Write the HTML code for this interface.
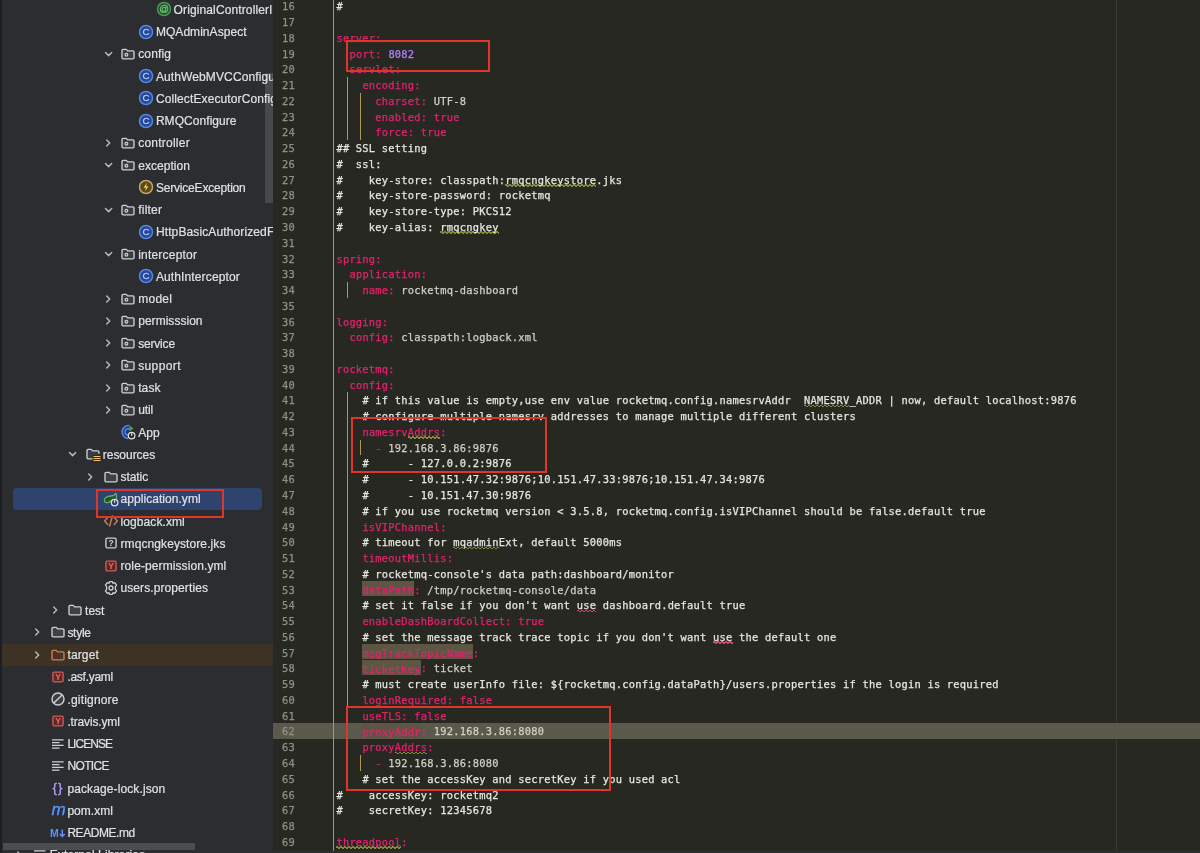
<!DOCTYPE html>
<html><head><meta charset="utf-8"><title>application.yml</title>
<style>
html,body{margin:0;padding:0;}
body{width:1200px;height:853px;overflow:hidden;background:#272822;position:relative;font-family:"Liberation Sans",sans-serif;}
#side{position:absolute;left:0;top:0;width:273px;height:853px;background:#2b2d30;overflow:hidden;}
.row{position:absolute;left:0;width:273px;height:22.25px;}
.row.tgt{background:#3d3223;left:2px;width:271px;}
.row.tgt .chev,.row.tgt .ico,.row.tgt .lbl{margin-left:-2px;}
.row.sel::before{content:"";position:absolute;left:13px;width:249px;top:0;height:22.25px;background:#2e436e;border-radius:4px;}
.chev,.ico{position:absolute;top:3.12px;width:16px;height:16px;}
.chev svg,.ico svg{display:block;}
.lbl{position:absolute;top:0.55px;height:22.25px;line-height:22.25px;font-size:12px;color:#dfe1e5;white-space:nowrap;letter-spacing:0.12px;-webkit-text-stroke:0.2px;}
#sb{position:absolute;left:264.5px;top:73px;width:8px;height:130px;background:#47494d;}
#hsb{position:absolute;left:2.5px;top:842.7px;width:192.5px;height:7.8px;background:#4b4d50;}
#edge{position:absolute;left:0;top:0;width:2px;height:853px;background:#1e1f22;}
#ed{position:absolute;left:273px;top:0;width:927px;height:853px;background:#272822;overflow:hidden;}
.ln{position:absolute;left:0;width:927px;height:15.765px;line-height:15.765px;font-family:"DejaVu Sans Mono","Liberation Mono",monospace;font-size:10.4px;letter-spacing:0.2387px;white-space:pre;-webkit-text-stroke:0.25px;}
.ln.cur{background:#5a594c;}
.no{position:absolute;top:1.05px;left:8px;width:14px;text-align:right;color:#90908a;}
.tx{position:absolute;top:1.05px;left:63.39999999999998px;color:#d8d8d2;}
.k{color:#e5216f;}
.n{color:#ae81ff;}
.v{color:#d0d0c6;}
.c{color:#e6e6e0;}
.hl{background:#5c5642;padding:2.9px 0 0.8px 0;}
.ty{background:linear-gradient(45deg,transparent 38%,#848a38 38%,#848a38 62%,transparent 62%) 0 100%/4px 2.5px repeat-x,linear-gradient(-45deg,transparent 38%,#848a38 38%,#848a38 62%,transparent 62%) 2px 100%/4px 2.5px repeat-x;padding-bottom:1px;}
.gr{background:linear-gradient(45deg,transparent 38%,#d0506a 38%,#d0506a 62%,transparent 62%) 0 100%/4px 2.5px repeat-x,linear-gradient(-45deg,transparent 38%,#d0506a 38%,#d0506a 62%,transparent 62%) 2px 100%/4px 2.5px repeat-x;padding-bottom:1px;}
.vline{position:absolute;left:333px;top:0;width:1px;height:853px;background:#b09756;}
.guide{position:absolute;width:1px;background:#b09756;}
.margin{position:absolute;top:0;width:1px;height:853px;background:#3a3b35;}
#bot{position:absolute;left:273px;top:850.5px;width:927px;height:3px;background:#2b2d30;}
.layer{position:absolute;left:0;top:0;width:100%;height:100%;will-change:transform;}
.rb{position:absolute;border:2.2px solid #de362b;box-sizing:border-box;}
</style></head>
<body>
<div id="ed">
<div class="margin" style="left:843px"></div>
<div class="layer">
<div class="ln" style="top:-1.78px"><span class="no">16</span><span class="tx"><span class="c">#</span></span></div>
<div class="ln" style="top:13.98px"><span class="no">17</span><span class="tx"></span></div>
<div class="ln" style="top:29.75px"><span class="no">18</span><span class="tx"><span class="k">server:</span></span></div>
<div class="ln" style="top:45.51px"><span class="no">19</span><span class="tx">  <span class="k">port:</span> <span class="n">8082</span></span></div>
<div class="ln" style="top:61.28px"><span class="no">20</span><span class="tx">  <span class="k">servlet:</span></span></div>
<div class="ln" style="top:77.04px"><span class="no">21</span><span class="tx">    <span class="k">encoding:</span></span></div>
<div class="ln" style="top:92.81px"><span class="no">22</span><span class="tx">      <span class="k">charset:</span> <span class="v">UTF-8</span></span></div>
<div class="ln" style="top:108.57px"><span class="no">23</span><span class="tx">      <span class="k">enabled:</span> <span class="k">true</span></span></div>
<div class="ln" style="top:124.34px"><span class="no">24</span><span class="tx">      <span class="k">force:</span> <span class="k">true</span></span></div>
<div class="ln" style="top:140.10px"><span class="no">25</span><span class="tx"><span class="c">## SSL setting</span></span></div>
<div class="ln" style="top:155.87px"><span class="no">26</span><span class="tx"><span class="c">#  ssl:</span></span></div>
<div class="ln" style="top:171.63px"><span class="no">27</span><span class="tx"><span class="c">#    key-store: classpath:<span class="ty">rmqcngkeystore</span>.jks</span></span></div>
<div class="ln" style="top:187.40px"><span class="no">28</span><span class="tx"><span class="c">#    key-store-password: rocketmq</span></span></div>
<div class="ln" style="top:203.16px"><span class="no">29</span><span class="tx"><span class="c">#    key-store-type: PKCS12</span></span></div>
<div class="ln" style="top:218.93px"><span class="no">30</span><span class="tx"><span class="c">#    key-alias: <span class="ty">rmqcngkey</span></span></span></div>
<div class="ln" style="top:234.69px"><span class="no">31</span><span class="tx"></span></div>
<div class="ln" style="top:250.46px"><span class="no">32</span><span class="tx"><span class="k">spring:</span></span></div>
<div class="ln" style="top:266.22px"><span class="no">33</span><span class="tx">  <span class="k">application:</span></span></div>
<div class="ln" style="top:281.99px"><span class="no">34</span><span class="tx">    <span class="k">name:</span> <span class="v">rocketmq-dashboard</span></span></div>
<div class="ln" style="top:297.75px"><span class="no">35</span><span class="tx"></span></div>
<div class="ln" style="top:313.52px"><span class="no">36</span><span class="tx"><span class="k">logging:</span></span></div>
<div class="ln" style="top:329.28px"><span class="no">37</span><span class="tx">  <span class="k">config:</span> <span class="v">classpath:logback.xml</span></span></div>
<div class="ln" style="top:345.05px"><span class="no">38</span><span class="tx"></span></div>
<div class="ln" style="top:360.81px"><span class="no">39</span><span class="tx"><span class="k">rocketmq:</span></span></div>
<div class="ln" style="top:376.58px"><span class="no">40</span><span class="tx">  <span class="k">config:</span></span></div>
<div class="ln" style="top:392.34px"><span class="no">41</span><span class="tx">    <span class="c"># if this value is empty,use env value rocketmq.config.namesrvAddr  <span class="ty">NAMESRV</span>_ADDR | now, default localhost:9876</span></span></div>
<div class="ln" style="top:408.11px"><span class="no">42</span><span class="tx">    <span class="c"># configure multiple namesrv addresses to manage multiple different clusters</span></span></div>
<div class="ln" style="top:423.87px"><span class="no">43</span><span class="tx">    <span class="k">namesrv<span class="ty">Addrs</span>:</span></span></div>
<div class="ln" style="top:439.64px"><span class="no">44</span><span class="tx">      <span class="k">-</span> <span class="v">192.168.3.86:9876</span></span></div>
<div class="ln" style="top:455.40px"><span class="no">45</span><span class="tx">    <span class="c">#      - 127.0.0.2:9876</span></span></div>
<div class="ln" style="top:471.17px"><span class="no">46</span><span class="tx">    <span class="c">#      - 10.151.47.32:9876;10.151.47.33:9876;10.151.47.34:9876</span></span></div>
<div class="ln" style="top:486.93px"><span class="no">47</span><span class="tx">    <span class="c">#      - 10.151.47.30:9876</span></span></div>
<div class="ln" style="top:502.70px"><span class="no">48</span><span class="tx">    <span class="c"># if you use rocketmq version &lt; 3.5.8, rocketmq.config.isVIPChannel should be false.default true</span></span></div>
<div class="ln" style="top:518.46px"><span class="no">49</span><span class="tx">    <span class="k">isVIPChannel:</span></span></div>
<div class="ln" style="top:534.23px"><span class="no">50</span><span class="tx">    <span class="c"># timeout for <span class="ty">mqadmin</span>Ext, default 5000ms</span></span></div>
<div class="ln" style="top:549.99px"><span class="no">51</span><span class="tx">    <span class="k">timeoutMillis:</span></span></div>
<div class="ln" style="top:565.76px"><span class="no">52</span><span class="tx">    <span class="c"># rocketmq-console&#x27;s data path:dashboard/monitor</span></span></div>
<div class="ln" style="top:581.52px"><span class="no">53</span><span class="tx">    <span class="k"><span class="hl">dataPath</span>:</span> <span class="v">/tmp/rocketmq-console/data</span></span></div>
<div class="ln" style="top:597.29px"><span class="no">54</span><span class="tx">    <span class="c"># set it false if you don&#x27;t want <span class="gr">use</span> dashboard.default true</span></span></div>
<div class="ln" style="top:613.05px"><span class="no">55</span><span class="tx">    <span class="k">enableDashBoardCollect:</span> <span class="k">true</span></span></div>
<div class="ln" style="top:628.82px"><span class="no">56</span><span class="tx">    <span class="c"># set the message track trace topic if you don&#x27;t want <span class="gr">use</span> the default one</span></span></div>
<div class="ln" style="top:644.58px"><span class="no">57</span><span class="tx">    <span class="k"><span class="hl">msgTrackTopicName</span>:</span></span></div>
<div class="ln" style="top:660.35px"><span class="no">58</span><span class="tx">    <span class="k"><span class="hl">ticketKey</span>:</span> <span class="v">ticket</span></span></div>
<div class="ln" style="top:676.11px"><span class="no">59</span><span class="tx">    <span class="c"># must create userInfo file: ${rocketmq.config.dataPath}/users.properties if the login is required</span></span></div>
<div class="ln" style="top:691.88px"><span class="no">60</span><span class="tx">    <span class="k">loginRequired:</span> <span class="k">false</span></span></div>
<div class="ln" style="top:707.64px"><span class="no">61</span><span class="tx">    <span class="k">useTLS:</span> <span class="k">false</span></span></div>
<div class="ln cur" style="top:723.41px"><span class="no">62</span><span class="tx">    <span class="k"><span class="hl">proxyAddr</span>:</span> <span class="v">192.168.3.86:8080</span></span></div>
<div class="ln" style="top:739.17px"><span class="no">63</span><span class="tx">    <span class="k">proxy<span class="ty">Addrs</span>:</span></span></div>
<div class="ln" style="top:754.94px"><span class="no">64</span><span class="tx">      <span class="k">-</span> <span class="v">192.168.3.86:8080</span></span></div>
<div class="ln" style="top:770.70px"><span class="no">65</span><span class="tx">    <span class="c"># set the accessKey and secretKey if you used acl</span></span></div>
<div class="ln" style="top:786.47px"><span class="no">66</span><span class="tx"><span class="c">#    accessKey: rocketmq2</span></span></div>
<div class="ln" style="top:802.23px"><span class="no">67</span><span class="tx"><span class="c">#    secretKey: 12345678</span></span></div>
<div class="ln" style="top:818.00px"><span class="no">68</span><span class="tx"></span></div>
<div class="ln" style="top:833.76px"><span class="no">69</span><span class="tx"><span class="k"><span class="ty">threadpool</span>:</span></span></div>
</div>
</div>
<div class="vline"></div>
<div id="bot"></div>
<div class="guide" style="left:347px;top:77.0px;height:63.1px"></div>
<div class="guide" style="left:360px;top:92.8px;height:47.3px"></div>
<div class="guide" style="left:347px;top:282.0px;height:15.8px"></div>
<div class="guide" style="left:347px;top:392.3px;height:394.1px"></div>
<div class="guide" style="left:360px;top:439.6px;height:15.8px"></div>
<div class="guide" style="left:360px;top:754.9px;height:15.8px"></div>
<div id="side">
<div id="sb"></div>
<div class="layer">
<div class="row" style="top:-1.72px"><span class="ico" style="left:156px;top:2.72px"><svg width="16" height="16" viewBox="0 0 16 16"><circle cx="8" cy="8" r="6.5" fill="#1f5229" stroke="#4e9556" stroke-width="1.5"/><text x="8" y="10.9" font-family="Liberation Sans, sans-serif" font-size="9.5" text-anchor="middle" fill="#74c47e" stroke="#74c47e" stroke-width="0.3">@</text></svg></span><span class="lbl" style="left:173.6px">OriginalControllerI</span></div>
<div class="row" style="top:20.52px"><span class="ico" style="left:138px;top:3.48px"><svg width="16" height="16" viewBox="0 0 16 16"><circle cx="8" cy="8" r="6.5" fill="#21469a" stroke="#5a86da" stroke-width="1.5"/><text x="8.1" y="11.4" font-family="Liberation Sans, sans-serif" font-size="9.8" text-anchor="middle" fill="#b6c9f2" stroke="#b6c9f2" stroke-width="0.3">C</text></svg></span><span class="lbl" style="left:155.9px;letter-spacing:0.051px">MQAdminAspect</span></div>
<div class="row" style="top:42.77px"><span class="chev" style="left:99.8px;top:3.12px"><svg width="16" height="16" viewBox="0 0 16 16"><path d="M5.5 6.5 L8.6 9.6 L11.7 6.5" fill="none" stroke="#b4b6bc" stroke-width="1.5" stroke-linecap="round" stroke-linejoin="round"/></svg></span><span class="ico" style="left:120px;top:3.23px"><svg width="16" height="16" viewBox="0 0 16 16"><path d="M2 4.4 Q2 3.3 3.1 3.3 H6.2 L7.7 4.9 H12.9 Q14 4.9 14 6 V11.7 Q14 12.8 12.9 12.8 H3.1 Q2 12.8 2 11.7 Z" fill="#3a3c40" stroke="#ced0d6" stroke-width="1.35"/><circle cx="6.4" cy="8.8" r="1.4" fill="none" stroke="#ced0d6" stroke-width="1.2"/></svg></span><span class="lbl" style="left:138.2px;letter-spacing:0.161px">config</span></div>
<div class="row" style="top:65.03px"><span class="ico" style="left:138px;top:2.97px"><svg width="16" height="16" viewBox="0 0 16 16"><circle cx="8" cy="8" r="6.5" fill="#21469a" stroke="#5a86da" stroke-width="1.5"/><text x="8.1" y="11.4" font-family="Liberation Sans, sans-serif" font-size="9.8" text-anchor="middle" fill="#b6c9f2" stroke="#b6c9f2" stroke-width="0.3">C</text></svg></span><span class="lbl" style="left:155.9px">AuthWebMVCConfigu</span></div>
<div class="row" style="top:87.28px"><span class="ico" style="left:138px;top:2.72px"><svg width="16" height="16" viewBox="0 0 16 16"><circle cx="8" cy="8" r="6.5" fill="#21469a" stroke="#5a86da" stroke-width="1.5"/><text x="8.1" y="11.4" font-family="Liberation Sans, sans-serif" font-size="9.8" text-anchor="middle" fill="#b6c9f2" stroke="#b6c9f2" stroke-width="0.3">C</text></svg></span><span class="lbl" style="left:155.9px">CollectExecutorConfig</span></div>
<div class="row" style="top:109.53px"><span class="ico" style="left:138px;top:3.47px"><svg width="16" height="16" viewBox="0 0 16 16"><circle cx="8" cy="8" r="6.5" fill="#21469a" stroke="#5a86da" stroke-width="1.5"/><text x="8.1" y="11.4" font-family="Liberation Sans, sans-serif" font-size="9.8" text-anchor="middle" fill="#b6c9f2" stroke="#b6c9f2" stroke-width="0.3">C</text></svg></span><span class="lbl" style="left:155.9px;letter-spacing:0.056px">RMQConfigure</span></div>
<div class="row" style="top:131.78px"><span class="chev" style="left:99.8px;top:3.12px"><svg width="16" height="16" viewBox="0 0 16 16"><path d="M6.7 5 L9.7 8 L6.7 11" fill="none" stroke="#b4b6bc" stroke-width="1.5" stroke-linecap="round" stroke-linejoin="round"/></svg></span><span class="ico" style="left:120px;top:3.22px"><svg width="16" height="16" viewBox="0 0 16 16"><path d="M2 4.4 Q2 3.3 3.1 3.3 H6.2 L7.7 4.9 H12.9 Q14 4.9 14 6 V11.7 Q14 12.8 12.9 12.8 H3.1 Q2 12.8 2 11.7 Z" fill="#3a3c40" stroke="#ced0d6" stroke-width="1.35"/><circle cx="6.4" cy="8.8" r="1.4" fill="none" stroke="#ced0d6" stroke-width="1.2"/></svg></span><span class="lbl" style="left:138.2px;letter-spacing:0.234px">controller</span></div>
<div class="row" style="top:154.03px"><span class="chev" style="left:99.8px;top:3.12px"><svg width="16" height="16" viewBox="0 0 16 16"><path d="M5.5 6.5 L8.6 9.6 L11.7 6.5" fill="none" stroke="#b4b6bc" stroke-width="1.5" stroke-linecap="round" stroke-linejoin="round"/></svg></span><span class="ico" style="left:120px;top:2.97px"><svg width="16" height="16" viewBox="0 0 16 16"><path d="M2 4.4 Q2 3.3 3.1 3.3 H6.2 L7.7 4.9 H12.9 Q14 4.9 14 6 V11.7 Q14 12.8 12.9 12.8 H3.1 Q2 12.8 2 11.7 Z" fill="#3a3c40" stroke="#ced0d6" stroke-width="1.35"/><circle cx="6.4" cy="8.8" r="1.4" fill="none" stroke="#ced0d6" stroke-width="1.2"/></svg></span><span class="lbl" style="left:138.2px;letter-spacing:0.036px">exception</span></div>
<div class="row" style="top:176.28px"><span class="ico" style="left:138px;top:2.72px"><svg width="16" height="16" viewBox="0 0 16 16"><circle cx="8" cy="8" r="6.5" fill="#5a4719" stroke="#c6a468" stroke-width="1.5"/><path d="M9 3.6 L5.5 8.7 H7.9 L7 12.4 L10.5 7.3 H8.1 Z" fill="#efc65c"/></svg></span><span class="lbl" style="left:155.9px;letter-spacing:-0.189px">ServiceException</span></div>
<div class="row" style="top:198.53px"><span class="chev" style="left:99.8px;top:3.12px"><svg width="16" height="16" viewBox="0 0 16 16"><path d="M5.5 6.5 L8.6 9.6 L11.7 6.5" fill="none" stroke="#b4b6bc" stroke-width="1.5" stroke-linecap="round" stroke-linejoin="round"/></svg></span><span class="ico" style="left:120px;top:3.47px"><svg width="16" height="16" viewBox="0 0 16 16"><path d="M2 4.4 Q2 3.3 3.1 3.3 H6.2 L7.7 4.9 H12.9 Q14 4.9 14 6 V11.7 Q14 12.8 12.9 12.8 H3.1 Q2 12.8 2 11.7 Z" fill="#3a3c40" stroke="#ced0d6" stroke-width="1.35"/><circle cx="6.4" cy="8.8" r="1.4" fill="none" stroke="#ced0d6" stroke-width="1.2"/></svg></span><span class="lbl" style="left:138.2px;letter-spacing:0.221px">filter</span></div>
<div class="row" style="top:220.78px"><span class="ico" style="left:138px;top:3.22px"><svg width="16" height="16" viewBox="0 0 16 16"><circle cx="8" cy="8" r="6.5" fill="#21469a" stroke="#5a86da" stroke-width="1.5"/><text x="8.1" y="11.4" font-family="Liberation Sans, sans-serif" font-size="9.8" text-anchor="middle" fill="#b6c9f2" stroke="#b6c9f2" stroke-width="0.3">C</text></svg></span><span class="lbl" style="left:155.9px">HttpBasicAuthorizedFi</span></div>
<div class="row" style="top:243.03px"><span class="chev" style="left:99.8px;top:3.12px"><svg width="16" height="16" viewBox="0 0 16 16"><path d="M5.5 6.5 L8.6 9.6 L11.7 6.5" fill="none" stroke="#b4b6bc" stroke-width="1.5" stroke-linecap="round" stroke-linejoin="round"/></svg></span><span class="ico" style="left:120px;top:2.97px"><svg width="16" height="16" viewBox="0 0 16 16"><path d="M2 4.4 Q2 3.3 3.1 3.3 H6.2 L7.7 4.9 H12.9 Q14 4.9 14 6 V11.7 Q14 12.8 12.9 12.8 H3.1 Q2 12.8 2 11.7 Z" fill="#3a3c40" stroke="#ced0d6" stroke-width="1.35"/><circle cx="6.4" cy="8.8" r="1.4" fill="none" stroke="#ced0d6" stroke-width="1.2"/></svg></span><span class="lbl" style="left:138.2px;letter-spacing:0.209px">interceptor</span></div>
<div class="row" style="top:265.27px"><span class="ico" style="left:138px;top:2.73px"><svg width="16" height="16" viewBox="0 0 16 16"><circle cx="8" cy="8" r="6.5" fill="#21469a" stroke="#5a86da" stroke-width="1.5"/><text x="8.1" y="11.4" font-family="Liberation Sans, sans-serif" font-size="9.8" text-anchor="middle" fill="#b6c9f2" stroke="#b6c9f2" stroke-width="0.3">C</text></svg></span><span class="lbl" style="left:155.9px;letter-spacing:0.129px">AuthInterceptor</span></div>
<div class="row" style="top:287.52px"><span class="chev" style="left:99.8px;top:3.12px"><svg width="16" height="16" viewBox="0 0 16 16"><path d="M6.7 5 L9.7 8 L6.7 11" fill="none" stroke="#b4b6bc" stroke-width="1.5" stroke-linecap="round" stroke-linejoin="round"/></svg></span><span class="ico" style="left:120px;top:3.48px"><svg width="16" height="16" viewBox="0 0 16 16"><path d="M2 4.4 Q2 3.3 3.1 3.3 H6.2 L7.7 4.9 H12.9 Q14 4.9 14 6 V11.7 Q14 12.8 12.9 12.8 H3.1 Q2 12.8 2 11.7 Z" fill="#3a3c40" stroke="#ced0d6" stroke-width="1.35"/><circle cx="6.4" cy="8.8" r="1.4" fill="none" stroke="#ced0d6" stroke-width="1.2"/></svg></span><span class="lbl" style="left:138.2px;letter-spacing:0.263px">model</span></div>
<div class="row" style="top:309.77px"><span class="chev" style="left:99.8px;top:3.12px"><svg width="16" height="16" viewBox="0 0 16 16"><path d="M6.7 5 L9.7 8 L6.7 11" fill="none" stroke="#b4b6bc" stroke-width="1.5" stroke-linecap="round" stroke-linejoin="round"/></svg></span><span class="ico" style="left:120px;top:3.23px"><svg width="16" height="16" viewBox="0 0 16 16"><path d="M2 4.4 Q2 3.3 3.1 3.3 H6.2 L7.7 4.9 H12.9 Q14 4.9 14 6 V11.7 Q14 12.8 12.9 12.8 H3.1 Q2 12.8 2 11.7 Z" fill="#3a3c40" stroke="#ced0d6" stroke-width="1.35"/><circle cx="6.4" cy="8.8" r="1.4" fill="none" stroke="#ced0d6" stroke-width="1.2"/></svg></span><span class="lbl" style="left:138.2px;letter-spacing:0.034px">permisssion</span></div>
<div class="row" style="top:332.02px"><span class="chev" style="left:99.8px;top:3.12px"><svg width="16" height="16" viewBox="0 0 16 16"><path d="M6.7 5 L9.7 8 L6.7 11" fill="none" stroke="#b4b6bc" stroke-width="1.5" stroke-linecap="round" stroke-linejoin="round"/></svg></span><span class="ico" style="left:120px;top:2.98px"><svg width="16" height="16" viewBox="0 0 16 16"><path d="M2 4.4 Q2 3.3 3.1 3.3 H6.2 L7.7 4.9 H12.9 Q14 4.9 14 6 V11.7 Q14 12.8 12.9 12.8 H3.1 Q2 12.8 2 11.7 Z" fill="#3a3c40" stroke="#ced0d6" stroke-width="1.35"/><circle cx="6.4" cy="8.8" r="1.4" fill="none" stroke="#ced0d6" stroke-width="1.2"/></svg></span><span class="lbl" style="left:138.2px;letter-spacing:-0.188px">service</span></div>
<div class="row" style="top:354.27px"><span class="chev" style="left:99.8px;top:3.12px"><svg width="16" height="16" viewBox="0 0 16 16"><path d="M6.7 5 L9.7 8 L6.7 11" fill="none" stroke="#b4b6bc" stroke-width="1.5" stroke-linecap="round" stroke-linejoin="round"/></svg></span><span class="ico" style="left:120px;top:2.73px"><svg width="16" height="16" viewBox="0 0 16 16"><path d="M2 4.4 Q2 3.3 3.1 3.3 H6.2 L7.7 4.9 H12.9 Q14 4.9 14 6 V11.7 Q14 12.8 12.9 12.8 H3.1 Q2 12.8 2 11.7 Z" fill="#3a3c40" stroke="#ced0d6" stroke-width="1.35"/><circle cx="6.4" cy="8.8" r="1.4" fill="none" stroke="#ced0d6" stroke-width="1.2"/></svg></span><span class="lbl" style="left:138.2px;letter-spacing:0.381px">support</span></div>
<div class="row" style="top:376.52px"><span class="chev" style="left:99.8px;top:3.12px"><svg width="16" height="16" viewBox="0 0 16 16"><path d="M6.7 5 L9.7 8 L6.7 11" fill="none" stroke="#b4b6bc" stroke-width="1.5" stroke-linecap="round" stroke-linejoin="round"/></svg></span><span class="ico" style="left:120px;top:3.48px"><svg width="16" height="16" viewBox="0 0 16 16"><path d="M2 4.4 Q2 3.3 3.1 3.3 H6.2 L7.7 4.9 H12.9 Q14 4.9 14 6 V11.7 Q14 12.8 12.9 12.8 H3.1 Q2 12.8 2 11.7 Z" fill="#3a3c40" stroke="#ced0d6" stroke-width="1.35"/><circle cx="6.4" cy="8.8" r="1.4" fill="none" stroke="#ced0d6" stroke-width="1.2"/></svg></span><span class="lbl" style="left:138.2px;letter-spacing:0.096px">task</span></div>
<div class="row" style="top:398.77px"><span class="chev" style="left:99.8px;top:3.12px"><svg width="16" height="16" viewBox="0 0 16 16"><path d="M6.7 5 L9.7 8 L6.7 11" fill="none" stroke="#b4b6bc" stroke-width="1.5" stroke-linecap="round" stroke-linejoin="round"/></svg></span><span class="ico" style="left:120px;top:3.23px"><svg width="16" height="16" viewBox="0 0 16 16"><path d="M2 4.4 Q2 3.3 3.1 3.3 H6.2 L7.7 4.9 H12.9 Q14 4.9 14 6 V11.7 Q14 12.8 12.9 12.8 H3.1 Q2 12.8 2 11.7 Z" fill="#3a3c40" stroke="#ced0d6" stroke-width="1.35"/><circle cx="6.4" cy="8.8" r="1.4" fill="none" stroke="#ced0d6" stroke-width="1.2"/></svg></span><span class="lbl" style="left:138.2px;letter-spacing:-0.086px">util</span></div>
<div class="row" style="top:421.02px"><span class="ico" style="left:120px;top:2.98px"><svg width="16" height="16" viewBox="0 0 16 16"><path d="M9 1.6 A6.4 6.4 0 1 0 8 14.4" fill="#24386e" stroke="#548af7" stroke-width="1.5"/><path d="M9.6 5.4 A3 3 0 1 0 9.2 10.6" fill="none" stroke="#548af7" stroke-width="1.5"/><path d="M9.3 1.2 L13.6 4.4 L9.3 7.6 Z" fill="#4f9a56"/><circle cx="11.6" cy="11.6" r="3.3" fill="#2b2d30" stroke="#dfe1e5" stroke-width="1.2"/><path d="M11.6 9.2 V11.8" stroke="#dfe1e5" stroke-width="1.2"/></svg></span><span class="lbl" style="left:138.2px;letter-spacing:0.114px">App</span></div>
<div class="row" style="top:443.27px"><span class="chev" style="left:64.4px;top:3.12px"><svg width="16" height="16" viewBox="0 0 16 16"><path d="M5.5 6.5 L8.6 9.6 L11.7 6.5" fill="none" stroke="#b4b6bc" stroke-width="1.5" stroke-linecap="round" stroke-linejoin="round"/></svg></span><span class="ico" style="left:85px;top:2.73px"><svg width="16" height="16" viewBox="0 0 16 16"><path d="M8.4 12.8 H3.1 Q2 12.8 2 11.7 V4.4 Q2 3.3 3.1 3.3 H6.2 L7.7 4.9 H12.9 Q14 4.9 14 6 V7.8" fill="#3a3c40" stroke="#ced0d6" stroke-width="1.35"/><rect x="7.6" y="8.8" width="8.4" height="7.2" fill="#2b2d30"/><path d="M8.5 10.5 H15.5 M8.5 12.5 H15.5 M8.5 14.5 H15.5" stroke="#f2c55c" stroke-width="1"/></svg></span><span class="lbl" style="left:102.8px;letter-spacing:-0.032px">resources</span></div>
<div class="row" style="top:465.52px"><span class="chev" style="left:82.1px;top:3.12px"><svg width="16" height="16" viewBox="0 0 16 16"><path d="M6.7 5 L9.7 8 L6.7 11" fill="none" stroke="#b4b6bc" stroke-width="1.5" stroke-linecap="round" stroke-linejoin="round"/></svg></span><span class="ico" style="left:103px;top:3.48px"><svg width="16" height="16" viewBox="0 0 16 16"><path d="M2 4.4 Q2 3.3 3.1 3.3 H6.2 L7.7 4.9 H12.9 Q14 4.9 14 6 V11.7 Q14 12.8 12.9 12.8 H3.1 Q2 12.8 2 11.7 Z" fill="#3e4044" stroke="#ced0d6" stroke-width="1.35"/></svg></span><span class="lbl" style="left:120.5px;letter-spacing:-0.069px">static</span></div>
<div class="row sel" style="top:487.77px"><span class="ico" style="left:103px;top:3.23px"><svg width="16" height="16" viewBox="0 0 16 16"><path d="M1.4 10.6 C0.8 7 3.6 5 7.6 5 C10.2 5 11.8 4.2 12.8 2.2 C14 5 13.8 7.4 12.4 9 L8.4 9.4 C6.4 12 3 12.4 1.4 10.6 Z" fill="#2a5230" stroke="#5fae68" stroke-width="1.3" stroke-linejoin="round"/><circle cx="11.6" cy="11.6" r="3.3" fill="#2e436e" stroke="#dfe1e5" stroke-width="1.2"/><path d="M11.6 9.2 V11.8" stroke="#dfe1e5" stroke-width="1.2"/></svg></span><span class="lbl" style="left:120.5px;letter-spacing:0.055px">application.yml</span></div>
<div class="row" style="top:510.02px"><span class="ico" style="left:103px;top:2.98px"><svg width="16" height="16" viewBox="0 0 16 16"><path d="M4.8 4.6 L1.6 8 L4.8 11.4 M11.2 4.6 L14.4 8 L11.2 11.4 M9.4 3 L6.6 13" fill="none" stroke="#c9805a" stroke-width="1.4" stroke-linecap="round" stroke-linejoin="round"/></svg></span><span class="lbl" style="left:120.5px;letter-spacing:0.086px">logback.xml</span></div>
<div class="row" style="top:532.27px"><span class="ico" style="left:103px;top:2.73px"><svg width="16" height="16" viewBox="0 0 16 16"><rect x="2.9" y="3.1" width="10.2" height="9.8" rx="1.3" fill="none" stroke="#ced0d6" stroke-width="1.35"/><text x="8" y="11.2" font-family="Liberation Sans, sans-serif" font-size="8.5" font-weight="bold" text-anchor="middle" fill="#ced0d6">?</text></svg></span><span class="lbl" style="left:120.5px;letter-spacing:0.09px">rmqcngkeystore.jks</span></div>
<div class="row" style="top:554.52px"><span class="ico" style="left:103px;top:3.48px"><svg width="16" height="16" viewBox="0 0 16 16"><rect x="2.9" y="3.1" width="10.2" height="9.8" rx="1.3" fill="#5a2a28" stroke="#d25c58" stroke-width="1.35"/><text x="8" y="11.3" font-family="Liberation Sans, sans-serif" font-size="8.5" font-weight="bold" text-anchor="middle" fill="#ee6a66">Y</text></svg></span><span class="lbl" style="left:120.5px;letter-spacing:0.098px">role-permission.yml</span></div>
<div class="row" style="top:576.77px"><span class="ico" style="left:103px;top:3.23px"><svg width="16" height="16" viewBox="0 0 16 16"><path d="M6.6 1.6 H9.4 L10 3.3 L11.7 2.7 L13.6 5.2 L12.4 6.6 V9.4 L13.6 10.8 L11.7 13.3 L10 12.7 L9.4 14.4 H6.6 L6 12.7 L4.3 13.3 L2.4 10.8 L3.6 9.4 V6.6 L2.4 5.2 L4.3 2.7 L6 3.3 Z" fill="none" stroke="#ced0d6" stroke-width="1.3" stroke-linejoin="round"/><circle cx="8" cy="8" r="2" fill="none" stroke="#ced0d6" stroke-width="1.3"/></svg></span><span class="lbl" style="left:120.5px;letter-spacing:0.091px">users.properties</span></div>
<div class="row" style="top:599.02px"><span class="chev" style="left:46.7px;top:3.12px"><svg width="16" height="16" viewBox="0 0 16 16"><path d="M6.7 5 L9.7 8 L6.7 11" fill="none" stroke="#b4b6bc" stroke-width="1.5" stroke-linecap="round" stroke-linejoin="round"/></svg></span><span class="ico" style="left:67px;top:2.98px"><svg width="16" height="16" viewBox="0 0 16 16"><path d="M2 4.4 Q2 3.3 3.1 3.3 H6.2 L7.7 4.9 H12.9 Q14 4.9 14 6 V11.7 Q14 12.8 12.9 12.8 H3.1 Q2 12.8 2 11.7 Z" fill="#3e4044" stroke="#ced0d6" stroke-width="1.35"/></svg></span><span class="lbl" style="left:85.1px;letter-spacing:-0.011px">test</span></div>
<div class="row" style="top:621.27px"><span class="chev" style="left:29.0px;top:3.12px"><svg width="16" height="16" viewBox="0 0 16 16"><path d="M6.7 5 L9.7 8 L6.7 11" fill="none" stroke="#b4b6bc" stroke-width="1.5" stroke-linecap="round" stroke-linejoin="round"/></svg></span><span class="ico" style="left:50px;top:2.73px"><svg width="16" height="16" viewBox="0 0 16 16"><path d="M2 4.4 Q2 3.3 3.1 3.3 H6.2 L7.7 4.9 H12.9 Q14 4.9 14 6 V11.7 Q14 12.8 12.9 12.8 H3.1 Q2 12.8 2 11.7 Z" fill="#3e4044" stroke="#ced0d6" stroke-width="1.35"/></svg></span><span class="lbl" style="left:67.4px;letter-spacing:-0.278px">style</span></div>
<div class="row tgt" style="top:643.52px"><span class="chev" style="left:29.0px;top:3.12px"><svg width="16" height="16" viewBox="0 0 16 16"><path d="M6.7 5 L9.7 8 L6.7 11" fill="none" stroke="#b4b6bc" stroke-width="1.5" stroke-linecap="round" stroke-linejoin="round"/></svg></span><span class="ico" style="left:50px;top:3.48px"><svg width="16" height="16" viewBox="0 0 16 16"><path d="M2 4.4 Q2 3.3 3.1 3.3 H6.2 L7.7 4.9 H12.9 Q14 4.9 14 6 V11.7 Q14 12.8 12.9 12.8 H3.1 Q2 12.8 2 11.7 Z" fill="#4a3328" stroke="#d0805a" stroke-width="1.35"/></svg></span><span class="lbl" style="left:67.4px;letter-spacing:0.152px">target</span></div>
<div class="row" style="top:665.77px"><span class="ico" style="left:50px;top:3.23px"><svg width="16" height="16" viewBox="0 0 16 16"><rect x="2.9" y="3.1" width="10.2" height="9.8" rx="1.3" fill="#5a2a28" stroke="#d25c58" stroke-width="1.35"/><text x="8" y="11.3" font-family="Liberation Sans, sans-serif" font-size="8.5" font-weight="bold" text-anchor="middle" fill="#ee6a66">Y</text></svg></span><span class="lbl" style="left:67.4px;letter-spacing:-0.268px">.asf.yaml</span></div>
<div class="row" style="top:688.02px"><span class="ico" style="left:50px;top:2.98px"><svg width="16" height="16" viewBox="0 0 16 16"><circle cx="8" cy="8" r="6" fill="#3e4044" stroke="#ced0d6" stroke-width="1.4"/><path d="M3.9 12.1 L12.1 3.9" stroke="#ced0d6" stroke-width="1.4"/></svg></span><span class="lbl" style="left:67.4px;letter-spacing:0.192px">.gitignore</span></div>
<div class="row" style="top:710.27px"><span class="ico" style="left:50px;top:2.73px"><svg width="16" height="16" viewBox="0 0 16 16"><rect x="2.9" y="3.1" width="10.2" height="9.8" rx="1.3" fill="#5a2a28" stroke="#d25c58" stroke-width="1.35"/><text x="8" y="11.3" font-family="Liberation Sans, sans-serif" font-size="8.5" font-weight="bold" text-anchor="middle" fill="#ee6a66">Y</text></svg></span><span class="lbl" style="left:67.4px;letter-spacing:-0.155px">.travis.yml</span></div>
<div class="row" style="top:732.52px"><span class="ico" style="left:50px;top:3.48px"><svg width="16" height="16" viewBox="0 0 16 16"><path d="M2 3.8 H13.6 M2 6.6 H9.5 M2 9.4 H13.6 M2 12.2 H9.5" stroke="#ced0d6" stroke-width="1.3"/></svg></span><span class="lbl" style="left:67.4px;letter-spacing:-0.966px">LICENSE</span></div>
<div class="row" style="top:754.77px"><span class="ico" style="left:50px;top:3.23px"><svg width="16" height="16" viewBox="0 0 16 16"><path d="M2 3.8 H13.6 M2 6.6 H9.5 M2 9.4 H13.6 M2 12.2 H9.5" stroke="#ced0d6" stroke-width="1.3"/></svg></span><span class="lbl" style="left:67.4px;letter-spacing:-0.624px">NOTICE</span></div>
<div class="row" style="top:777.02px"><span class="ico" style="left:50px;top:2.98px"><svg width="16" height="16" viewBox="0 0 16 16"><text x="8" y="12.3" font-family="Liberation Sans, sans-serif" font-size="13.5" letter-spacing="1" text-anchor="middle" fill="#b99bf8" stroke="#b99bf8" stroke-width="0.3">{}</text></svg></span><span class="lbl" style="left:67.4px;letter-spacing:0.114px">package-lock.json</span></div>
<div class="row" style="top:799.27px"><span class="ico" style="left:50px;top:2.73px"><svg width="18" height="16" viewBox="0 0 18 16"><text x="8.5" y="12.8" font-family="Liberation Sans, sans-serif" font-size="17" font-style="italic" text-anchor="middle" fill="#5a93ff" stroke="#5a93ff" stroke-width="0.35">m</text></svg></span><span class="lbl" style="left:67.4px;letter-spacing:0.037px">pom.xml</span></div>
<div class="row" style="top:821.52px"><span class="ico" style="left:50px;top:3.48px"><svg width="18" height="16" viewBox="0 0 18 16"><text x="0" y="12" font-family="Liberation Sans, sans-serif" font-size="10.5" font-weight="bold" fill="#5a93ff">M</text><path d="M12.3 4.6 V11.2 M9.9 8.9 L12.3 11.4 L14.7 8.9" fill="none" stroke="#5a93ff" stroke-width="1.5"/></svg></span><span class="lbl" style="left:67.4px;letter-spacing:-0.449px">README.md</span></div>
<div class="row" style="top:843.77px"><span class="chev" style="left:11.3px;top:3.12px"><svg width="16" height="16" viewBox="0 0 16 16"><path d="M6.7 5 L9.7 8 L6.7 11" fill="none" stroke="#b4b6bc" stroke-width="1.5" stroke-linecap="round" stroke-linejoin="round"/></svg></span><span class="ico" style="left:32px;top:3.23px"><svg width="16" height="16" viewBox="0 0 16 16"><path d="M2 3.8 H13.6 M2 6.6 H9.5 M2 9.4 H13.6 M2 12.2 H9.5" stroke="#ced0d6" stroke-width="1.3"/></svg></span><span class="lbl" style="left:49.7px">External Libraries</span></div>
</div>
<div id="hsb"></div>
<div id="edge"></div>
</div>
<div class="rb" style="left:346px;top:40px;width:143.5px;height:32px"></div>
<div class="rb" style="left:351px;top:417px;width:195.5px;height:55.5px"></div>
<div class="rb" style="left:345.8px;top:705.6px;width:264.8px;height:85px"></div>
<div class="rb" style="left:96px;top:489.2px;width:127.8px;height:29px"></div>
</body></html>
